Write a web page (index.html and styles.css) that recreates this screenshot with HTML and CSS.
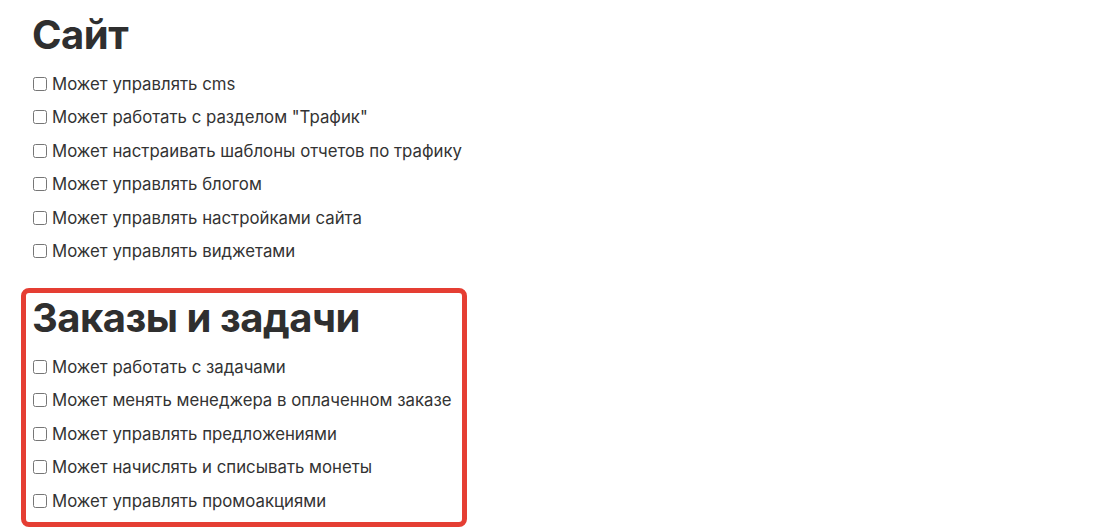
FILE: index.html
```html
<!DOCTYPE html>
<html>
<head>
  <title>Права сотрудника</title>
  <link rel="stylesheet" href="styles.css">
</head>
<body>
  <div class="rights">
    <section class="rights-group">
      <h2 class="rights-title">Сайт</h2>
      <label class="right-item"><input type="checkbox">Может управлять cms</label>
      <label class="right-item"><input type="checkbox">Может работать с разделом "Трафик"</label>
      <label class="right-item"><input type="checkbox">Может настраивать шаблоны отчетов по трафику</label>
      <label class="right-item"><input type="checkbox">Может управлять блогом</label>
      <label class="right-item"><input type="checkbox">Может управлять настройками сайта</label>
      <label class="right-item"><input type="checkbox">Может управлять виджетами</label>
    </section>

    <section class="rights-group rights-group--marked">
      <h2 class="rights-title">Заказы и задачи</h2>
      <label class="right-item"><input type="checkbox">Может работать с задачами</label>
      <label class="right-item"><input type="checkbox">Может менять менеджера в оплаченном заказе</label>
      <label class="right-item"><input type="checkbox">Может управлять предложениями</label>
      <label class="right-item"><input type="checkbox">Может начислять и списывать монеты</label>
      <label class="right-item"><input type="checkbox">Может управлять промоакциями</label>
    </section>
  </div>
</body>
</html>
```

FILE: styles.css
```css
* {
  margin: 0;
  padding: 0;
  box-sizing: border-box;
}

body {
  font-family: Inter, "Noto Sans", sans-serif;
  color: #333;
  background: #fff;
}

.rights {
  display: flex;
  flex-direction: column;
  gap: 11px;
  padding: 5px 0 0 21px;
}

.rights-group {
  width: 446px;
  border: 5px solid transparent;
  border-radius: 8px;
  padding: 1px 3px 4px;
}

.rights-group--marked {
  border-color: #e53e33;
}

.rights-title {
  font-size: 40px;
  font-weight: 700;
  line-height: 48px;
  letter-spacing: -0.5px;
  margin: 0 0 8px 3px;
  color: #2f2f2f;
}

.right-item {
  display: flex;
  align-items: center;
  height: 33.5px;
  font-size: 16.8px;
  white-space: nowrap;
  color: #333;
}

.right-item input {
  flex-shrink: 0;
  width: 14px;
  height: 14px;
  margin: 0 5px 0 4px;
}
```
